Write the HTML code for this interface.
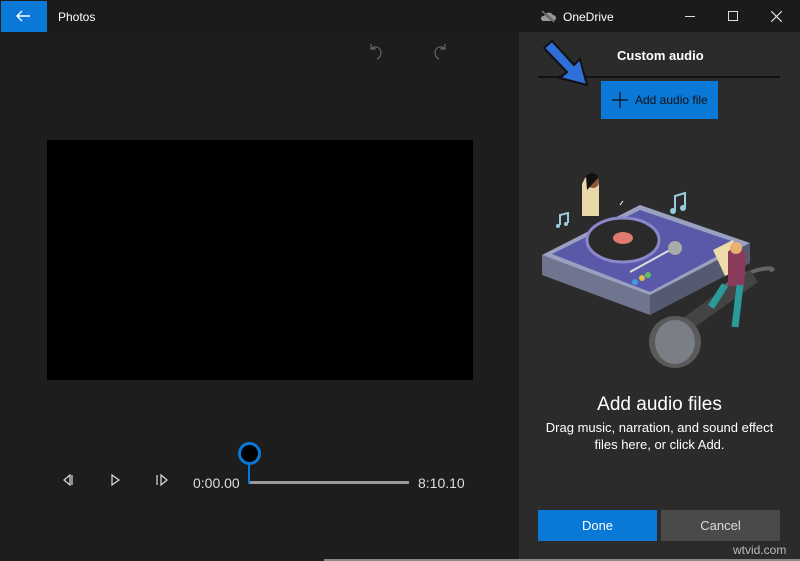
<!DOCTYPE html>
<html><head><meta charset="utf-8"><style>
*{margin:0;padding:0;box-sizing:border-box}
body{width:800px;height:561px;background:#1d1d1d;font-family:"Liberation Sans",sans-serif;color:#fff;position:relative;overflow:hidden}
.abs{position:absolute}
.t{font-size:12px}
</style></head><body>
<div class="abs" style="left:0;top:0;width:800px;height:32px;background:#1b1b1b"></div>
<div class="abs" style="left:1px;top:1px;width:46px;height:31px;background:#0a78d7"></div>
<svg class="abs" style="left:15px;top:9px" width="16" height="14"><path d="M15 7H2M7 2L2 7l5 5" stroke="#fff" stroke-width="1.4" fill="none"/></svg>
<div class="abs t" style="left:58px;top:10px">Photos</div>
<svg class="abs" style="left:540px;top:10px" width="16" height="12"><path d="M3 11h10a3 3 0 0 0 0-6 5 5 0 0 0-9 1 2.5 2.5 0 0 0-1 5z" fill="#999"/><path d="M2 1l12 11" stroke="#1b1b1b" stroke-width="2"/><path d="M2 1l12 11" stroke="#999" stroke-width="1"/></svg>
<div class="abs t" style="left:563px;top:10px">OneDrive</div>
<div class="abs" style="left:685px;top:16px;width:10px;height:1px;background:#ddd"></div>
<div class="abs" style="left:728px;top:11px;width:10px;height:10px;border:1px solid #ddd"></div>
<svg class="abs" style="left:771px;top:11px" width="11" height="11"><path d="M0 0l11 11M11 0L0 11" stroke="#ddd" stroke-width="1.2"/></svg>
<svg class="abs" style="left:368px;top:42px" width="16" height="18"><path d="M3 2v5h5M3 7c4-4 10-2 10 4 0 3-2 5-4 6" stroke="#666" fill="none" stroke-width="1.2"/></svg>
<svg class="abs" style="left:432px;top:42px" width="16" height="18"><path d="M13 2v5H8M13 7C9 3 3 5 3 11c0 3 2 5 4 6" stroke="#666" fill="none" stroke-width="1.2"/></svg>
<div class="abs" style="left:47px;top:140px;width:426px;height:240px;background:#000"></div>
<svg class="abs" style="left:60px;top:470px" width="140" height="20"><path d="M10 5l-6 5 6 5zM12 5v10" stroke="#ddd" fill="none" stroke-width="1.2"/><path d="M52 5l7 5-7 5z" stroke="#ddd" fill="none" stroke-width="1.2"/><path d="M97 5v10M101 5l6 5-6 5z" stroke="#ddd" fill="none" stroke-width="1.2"/></svg>
<div class="abs" style="left:193px;top:475px;font-size:14px;color:#ddd">0:00.00</div>
<div class="abs" style="left:418px;top:475px;font-size:14px;color:#ddd">8:10.10</div>
<div class="abs" style="left:249px;top:481px;width:160px;height:3px;background:#999"></div>
<div class="abs" style="left:248px;top:460px;width:2px;height:24px;background:#0a78d7"></div>
<div class="abs" style="left:238px;top:442px;width:23px;height:23px;border-radius:50%;background:#000;border:3px solid #0a78d7"></div>
<div class="abs" style="left:519px;top:32px;width:281px;height:529px;background:#2b2b2b"></div>
<div class="abs" style="left:617px;top:48px;font-size:13px;font-weight:bold">Custom audio</div>
<div class="abs" style="left:538px;top:76px;width:242px;height:2px;background:#111"></div>
<svg class="abs" style="left:540px;top:40px" width="60" height="46"><path d="M4 8l8-7 22 24 6-6 7 26-27-7 7-6z" fill="#2f6fd8" stroke="#111" stroke-width="2"/></svg>
<div class="abs" style="left:601px;top:81px;width:117px;height:38px;background:#0a78d7"></div>
<svg class="abs" style="left:612px;top:92px" width="16" height="16"><path d="M8 0v16M0 8h16" stroke="#111" stroke-width="1.3"/></svg>
<div class="abs" style="left:635px;top:93px;font-size:12px;color:#111">Add audio file</div>
<svg class="abs" style="left:520px;top:170px" width="280" height="220">
<path d="M22 85l98-50 110 38-100 55z" fill="#9aa0c0"/>
<path d="M22 85v20l108 40v-20z" fill="#70758f"/><path d="M130 125v20l100-52v-20z" fill="#555a70"/>
<path d="M32 84l88-44 100 34-90 48z" fill="#5a58a8"/>
<ellipse cx="103" cy="70" rx="36" ry="22" fill="#2a2a2a" stroke="#8a88c8" stroke-width="3"/>
<ellipse cx="103" cy="68" rx="10" ry="6" fill="#e07a70"/>
<path d="M150 80l-40 22" stroke="#ddd" stroke-width="2"/><circle cx="155" cy="78" r="7" fill="#aaa"/>
<circle cx="115" cy="112" r="3" fill="#3aa0e0"/><circle cx="122" cy="108" r="3" fill="#e0c040"/><circle cx="128" cy="105" r="3" fill="#60c060"/>
<path d="M65 8c5-4 14-2 14 8v30H62V14z" fill="#e9d9a8"/><circle cx="73" cy="12" r="6" fill="#8a5a3a"/><path d="M66 6c4-5 12-3 12 2l-11 12z" fill="#111"/>
<path d="M100 35l3-4M140 28" stroke="#fff"/>
<path d="M40 55v-10l8-2v10" stroke="#9cd" stroke-width="2" fill="none"/><circle cx="38" cy="56" r="2" fill="#9cd"/><circle cx="46" cy="54" r="2" fill="#9cd"/>
<path d="M155 40v-14l10-3v14" stroke="#9cd" stroke-width="2" fill="none"/><circle cx="153" cy="41" r="3" fill="#9cd"/><circle cx="163" cy="38" r="3" fill="#9cd"/>
<path d="M200 120c40-30 60-20 50 -20" stroke="#666" stroke-width="4" fill="none"/>
<path d="M160 150l70-50 8 12-70 50z" fill="#444"/>
<ellipse cx="155" cy="172" rx="26" ry="26" fill="#5a5a5a"/><ellipse cx="155" cy="172" rx="20" ry="22" fill="#7a7f86"/>
<path d="M193 80l20-10 10 28-18 8z" fill="#eddca8"/>
<path d="M208 82c4-6 16-6 18 4l-2 30h-16z" fill="#8a3a5a"/><circle cx="216" cy="78" r="6" fill="#e9b070"/>
<path d="M205 115l-14 22M220 115l-5 42" stroke="#2a9a9a" stroke-width="7"/>
</svg>
<div class="abs" style="left:519px;top:394px;width:281px;text-align:center;font-size:19px">Add audio files</div>
<div class="abs" style="left:519px;top:419px;width:281px;text-align:center;font-size:13px;line-height:17px">Drag music, narration, and sound effect<br>files here, or click Add.</div>
<div class="abs" style="left:538px;top:510px;width:119px;height:31px;background:#0a78d7;text-align:center;line-height:31px;font-size:13px">Done</div>
<div class="abs" style="left:661px;top:510px;width:119px;height:31px;background:#4a4a4a;text-align:center;line-height:31px;font-size:13px;color:#ddd">Cancel</div>
<div class="abs" style="left:733px;top:543px;font-size:12px;color:#bbb">wtvid.com</div>
<div class="abs" style="left:324px;top:559px;width:476px;height:2px;background:#888"></div>
</body></html>
